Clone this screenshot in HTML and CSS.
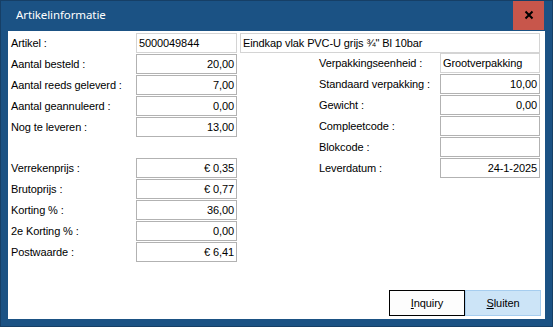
FILE: index.html
```html
<!DOCTYPE html>
<html lang="nl">
<head>
    <meta charset="UTF-8">
    <title>Artikelinformatie</title>
    <link rel="stylesheet" href="styles.css">
</head>
<body>
    <div class="window">
        <div class="titlebar">
            <span class="title">Artikelinformatie</span>
            <button class="close" title="Sluiten">
                <svg width="10" height="10" viewBox="0 0 10 10">
                    <path d="M1.5 1.5 L8.5 8.5 M8.5 1.5 L1.5 8.5" stroke="#000" stroke-width="2" fill="none"/>
                </svg>
            </button>
        </div>

        <div class="client">
            <div class="top-row">
                <span class="label">Artikel :</span>
                <div class="field plain">5000049844</div>
                <div class="field plain desc">Eindkap vlak PVC-U grijs ¾" Bl 10bar</div>
            </div>

            <div class="columns">
                <div class="col-left">
                    <div class="group">
                        <div class="row"><span class="label">Aantal besteld :</span><div class="field num">20,00</div></div>
                        <div class="row"><span class="label">Aantal reeds geleverd :</span><div class="field num">7,00</div></div>
                        <div class="row"><span class="label">Aantal geannuleerd :</span><div class="field num">0,00</div></div>
                        <div class="row"><span class="label">Nog te leveren :</span><div class="field num">13,00</div></div>
                    </div>
                    <div class="group second">
                        <div class="row"><span class="label">Verrekenprijs :</span><div class="field num">€ 0,35</div></div>
                        <div class="row"><span class="label">Brutoprijs :</span><div class="field num">€ 0,77</div></div>
                        <div class="row"><span class="label">Korting % :</span><div class="field num">36,00</div></div>
                        <div class="row"><span class="label">2e Korting % :</span><div class="field num">0,00</div></div>
                        <div class="row"><span class="label">Postwaarde :</span><div class="field num">€ 6,41</div></div>
                    </div>
                </div>

                <div class="col-right">
                    <div class="group">
                        <div class="row"><span class="label">Verpakkingseenheid :</span><div class="field plain">Grootverpakking</div></div>
                        <div class="row"><span class="label">Standaard verpakking :</span><div class="field num">10,00</div></div>
                        <div class="row"><span class="label">Gewicht :</span><div class="field num">0,00</div></div>
                        <div class="row"><span class="label">Compleetcode :</span><div class="field num"></div></div>
                        <div class="row"><span class="label">Blokcode :</span><div class="field num"></div></div>
                        <div class="row"><span class="label">Leverdatum :</span><div class="field num">24-1-2025</div></div>
                    </div>
                </div>
            </div>

            <div class="buttons">
                <button class="btn btn-default"><u>I</u>nquiry</button>
                <button class="btn btn-hot"><u>S</u>luiten</button>
            </div>
        </div>
    </div>
</body>
</html>
```

FILE: styles.css
```css
* {
    margin: 0;
    padding: 0;
    box-sizing: border-box;
}

body {
    font-family: "Liberation Sans", Arial, sans-serif;
    font-size: 11px;
    color: #000;
    background: #fff;
}

.window {
    width: 553px;
    height: 327px;
    background: #1b5284;
    display: flex;
    flex-direction: column;
    outline: 1px solid #163f66;
    outline-offset: -1px;
}

/* title bar */
.titlebar {
    height: 31px;
    display: flex;
    align-items: flex-start;
}

.title {
    font-family: "Noto Sans", "Open Sans", sans-serif;
    font-size: 11.5px;
    letter-spacing: -0.1px;
    color: #fff;
    padding-left: 16px;
    line-height: 30px;
    flex: 1;
}

.close {
    width: 31px;
    height: 30px;
    margin-right: 9px;
    background: #c8564b;
    border: none;
    display: flex;
    align-items: center;
    justify-content: center;
}

/* client area */
.client {
    margin: 0 8px 8px;
    height: 288px;
    background: #fff;
    padding: 2px 5px 3px 3px;
    display: flex;
    flex-direction: column;
}

.label {
    letter-spacing: -0.1px;
    white-space: nowrap;
}

.top-row {
    display: flex;
    align-items: center;
    height: 20px;
}

.top-row .label {
    width: 125px;
}

.top-row .desc {
    width: 300px;
    margin-left: 3px;
}

.field {
    width: 101px;
    height: 20px;
    line-height: 18px;
    border: 1px solid #b2b2b2;
    background: #fff;
    padding: 0 2px;
    white-space: nowrap;
    overflow: hidden;
    letter-spacing: -0.1px;
}

.field.plain {
    border-color: #d4d4d4;
}

.field.num {
    text-align: right;
}

.columns {
    display: flex;
}

.col-left {
    width: 226px;
    padding-top: 1px;
}

.col-left .label {
    width: 125px;
}

.col-right {
    width: 221px;
    margin-left: 82px;
}

.col-right .label {
    width: 121px;
}

.col-right .field {
    width: 100px;
}

.group {
    display: flex;
    flex-direction: column;
    gap: 1px;
}

.group.second {
    margin-top: 21px;
}

.row {
    display: flex;
    align-items: center;
    height: 20px;
}

/* buttons */
.buttons {
    margin-top: auto;
    margin-right: -1px;
    display: flex;
    justify-content: flex-end;
}

.btn {
    width: 76px;
    height: 26px;
    font-family: "Liberation Sans", Arial, sans-serif;
    font-size: 11px;
    letter-spacing: -0.1px;
    color: #000;
}

.btn-default {
    background: #fdfdfd;
    border: 1px solid #000;
}

.btn-hot {
    background: #cce4f7;
    border: 1px solid #a6cdef;
}
```
